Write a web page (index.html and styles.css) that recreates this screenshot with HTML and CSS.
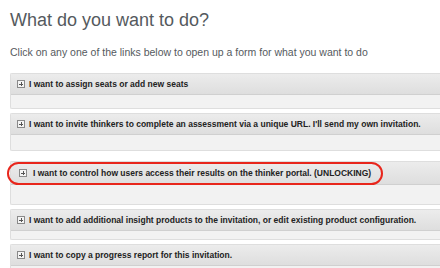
FILE: index.html
```html
<!DOCTYPE html>
<html>
<head>
<meta charset="utf-8">
<link rel="stylesheet" href="styles.css">
</head>
<body>
<div class="page">
  <h1 class="title">What do you want to do?</h1>
  <p class="intro">Click on any one of the links below to open up a form for what you want to do</p>
  <div class="panels">
    <div class="panel">
      <div class="panel-head"><span class="toggle"></span><span class="label">I want to assign seats or add new seats</span></div>
      <div class="panel-body body-short"></div>
    </div>
    <div class="panel">
      <div class="panel-head"><span class="toggle"></span><span class="label">I want to invite thinkers to complete an assessment via a unique URL. I'll send my own invitation.</span></div>
      <div class="panel-body"></div>
    </div>
    <div class="panel panel-marked">
      <div class="panel-head"><span class="toggle"></span><span class="label">I want to control how users access their results on the thinker portal. (UNLOCKING)</span><span class="marker"></span></div>
      <div class="panel-body"></div>
    </div>
    <div class="panel">
      <div class="panel-head"><span class="toggle"></span><span class="label">I want to add additional insight products to the invitation, or edit existing product configuration.</span></div>
      <div class="panel-body body-tiny"></div>
    </div>
    <div class="panel">
      <div class="panel-head"><span class="toggle"></span><span class="label">I want to copy a progress report for this invitation.</span></div>
      <div class="panel-body"></div>
    </div>
  </div>
</div>
</body>
</html>
```
FILE: styles.css
```css
html, body {
  margin: 0;
  padding: 0;
  background: #ffffff;
  overflow: hidden;
}
.page {
  width: 440px;
  height: 268px;
  padding: 0 0 0 10px;
  box-sizing: border-box;
  font-family: "Liberation Sans", Arial, sans-serif;
  overflow: hidden;
}
.title {
  margin: 0;
  padding-top: 9px;
  font-size: 18px;
  font-weight: normal;
  color: #555a5e;
  line-height: 22px;
}
.intro {
  margin: 15px 0 0 0;
  font-size: 10.5px;
  line-height: 13px;
  color: #555a5e;
}
.panels {
  margin-top: 14px;
  display: flex;
  flex-direction: column;
  gap: 4px;
  width: 440px;
}
.panel {
  border: 1px solid #dedede;
  border-right: none;
  border-radius: 2px 0 0 2px;
  background: #f2f2f2;
}
.panel-head {
  position: relative;
  display: flex;
  align-items: center;
  height: 20px;
  padding-left: 6px;
  background: linear-gradient(#ececec, #dedede);
  border-bottom: 1px solid #d0d0d0;
}
.toggle {
  position: relative;
  width: 6px;
  height: 6px;
  border: 1px solid #8a8a8a;
  background: #f4f4f4;
  margin-right: 4px;
  flex: none;
}
.toggle::before {
  content: "";
  position: absolute;
  left: 1px;
  right: 1px;
  top: 2.5px;
  height: 1px;
  background: #555;
}
.toggle::after {
  content: "";
  position: absolute;
  top: 1px;
  bottom: 1px;
  left: 2.5px;
  width: 1px;
  background: #555;
}
.label {
  font-size: 8.5px;
  font-weight: bold;
  color: #222;
  white-space: nowrap;
}
.panel-body {
  height: 15px;
}
.panel-body.body-short {
  height: 13px;
}
.panel-body.body-tiny {
  height: 8px;
}
.panel-marked {
  margin-top: 6px;
}
.panel-marked .panel-head {
  height: 22px;
  padding-left: 8px;
}
.panel-marked .panel-body {
  height: 19px;
}
.panel-marked .toggle {
  margin-right: 6px;
}
.marker {
  position: absolute;
  left: -4px;
  top: 0px;
  width: 372px;
  height: 19px;
  border: 2px solid #e8261c;
  border-radius: 12px;
}
```
